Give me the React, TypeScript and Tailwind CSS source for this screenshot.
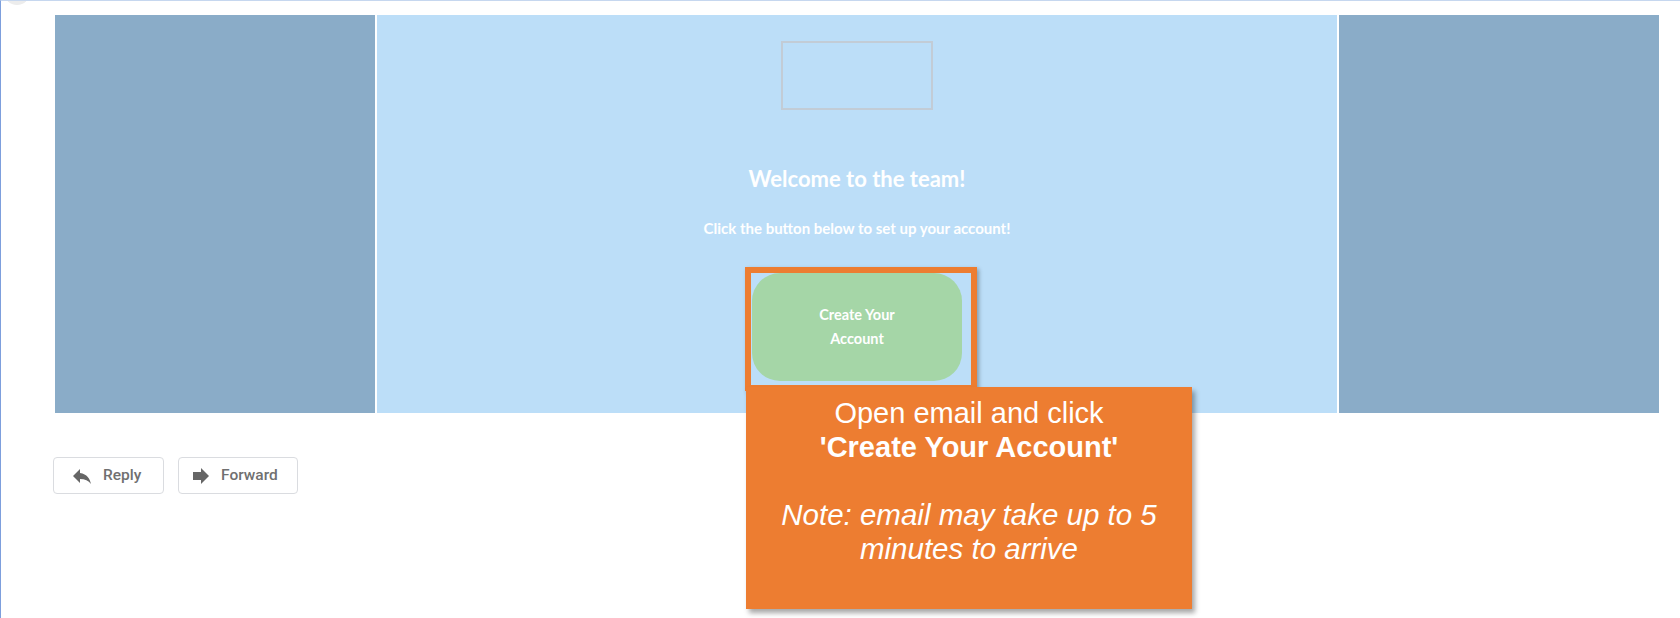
import React from "react";

const ReplyIcon = () => (
  <svg width="24" height="24" viewBox="0 0 24 24" fill="#666666" aria-hidden="true">
    <path d="M10 9V5l-7 7 7 7v-4.1c5 0 8.5 1.6 11 5.1-1-5-4-10-11-11z" />
  </svg>
);

const ForwardIcon = () => (
  <svg width="24" height="24" viewBox="0 0 24 24" fill="#666666" aria-hidden="true">
    <path d="M12 8V4l8 8-8 8v-4H4V8z" />
  </svg>
);

const App = () => {
  return (
    <div className="relative w-[1680px] h-[618px] overflow-hidden bg-white border-l border-t border-l-[#7d9fdd] border-t-[#c6d7ef]">
      {/* faint avatar edge in the corner */}
      <div className="absolute left-[3px] top-[-22px] w-[26px] h-[26px] rounded-full bg-[#ececec]"></div>

      {/* email body */}
      <div className="pl-[54px] pt-[14px]">
        <div className="flex gap-[2px] h-[398px]">
          <div className="w-[320px] bg-[#8aacc8]"></div>
          <div className="w-[960px] bg-[#bcdef8] flex flex-col items-center pt-[26px] font-['Lato',sans-serif] text-white">
            <div className="w-[152px] h-[69px] border-2 border-[#c2ccd6]"></div>
            <div className="mt-[55px] text-[22px] leading-[28px] font-bold">Welcome to the team!</div>
            <div className="mt-[25px] text-[15px] leading-[20px] font-bold">
              Click the button below to set up your account!
            </div>
            <div className="mt-[35px] w-[210px] h-[108px] rounded-[28px] bg-[#a5d6a7] flex flex-col items-center justify-center text-[14.5px] leading-[24px] font-bold">
              <span>Create Your</span>
              <span>Account</span>
            </div>
          </div>
          <div className="w-[320px] bg-[#8aacc8]"></div>
        </div>

        {/* reply / forward */}
        <div className="flex gap-[14px] mt-[44px] -ml-[2px] font-['Roboto',sans-serif]">
          <button className="w-[111px] h-[37px] flex items-center gap-[9px] pl-[16px] border border-[#dadce0] rounded-[4px] text-[15.5px] font-medium text-[#707070]">
            <ReplyIcon />
            Reply
          </button>
          <button className="w-[120px] h-[37px] flex items-center gap-[8px] pl-[10px] border border-[#dadce0] rounded-[4px] text-[15.5px] font-medium text-[#707070]">
            <ForwardIcon />
            Forward
          </button>
        </div>
      </div>

      {/* highlight around the button */}
      <div className="absolute left-[744px] top-[266px] w-[232px] h-[124px] border-[6px] border-[#ed7d31] shadow-[2px_2px_4px_rgba(0,0,0,0.3)]"></div>

      {/* instruction callout */}
      <div className="absolute left-[745px] top-[386px] w-[446px] h-[222px] bg-[#ed7d31] shadow-[3px_4px_5px_rgba(0,0,0,0.35)] pt-[9px] text-center text-white text-[29px] leading-[34px] font-['Liberation_Sans',Arial,sans-serif]">
        <div>Open email and click</div>
        <div className="font-bold">'Create Your Account'</div>
        <div>&nbsp;</div>
        <div className="italic text-[29.5px]">
          Note: email may take up to 5
          <br />
          minutes to arrive
        </div>
      </div>
    </div>
  );
};

export default App;
